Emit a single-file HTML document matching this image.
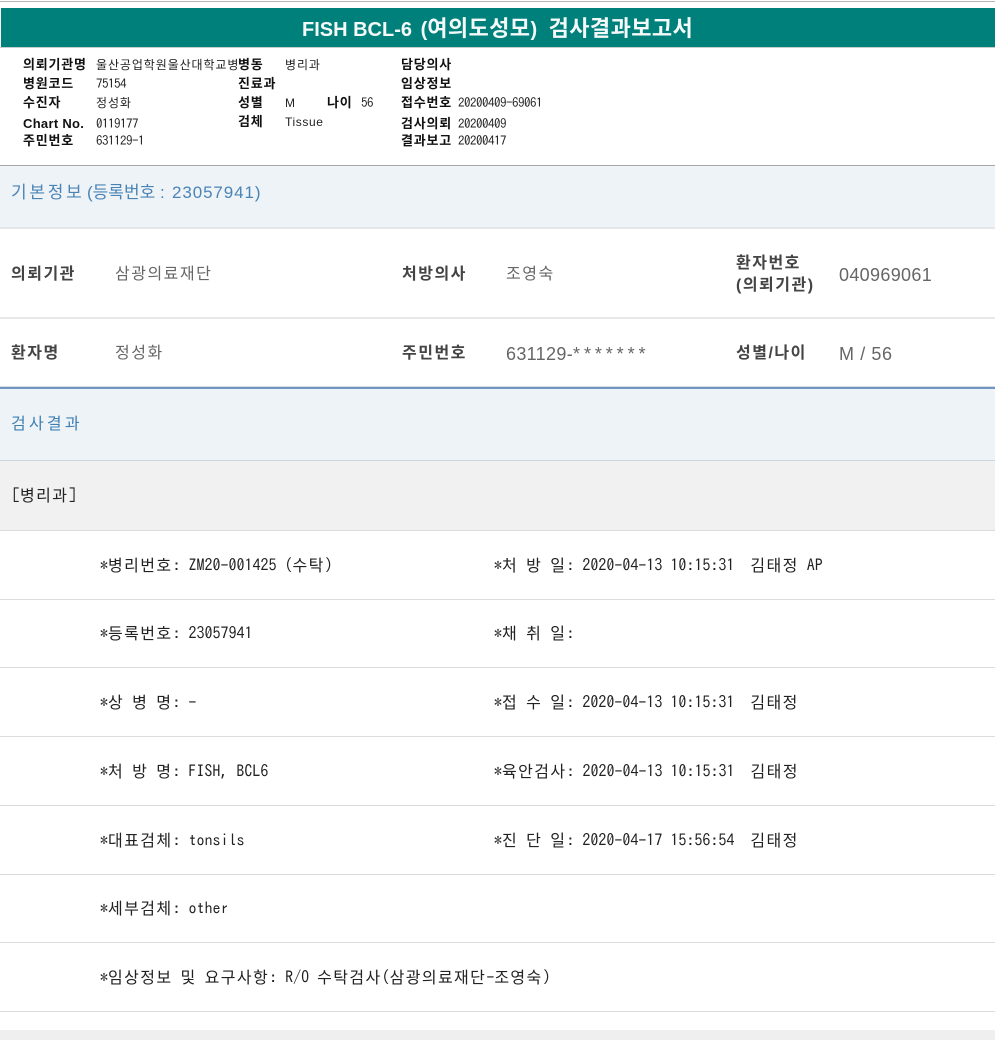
<!DOCTYPE html>
<html lang="ko"><head><meta charset="utf-8"><title>FISH BCL-6</title>
<style>
html,body{margin:0;padding:0;background:#fff}
#p{position:relative;width:995px;height:1040px;overflow:hidden;background:#fff;font-family:"Liberation Sans","Noto Sans CJK KR",sans-serif}
#p div{position:absolute;white-space:pre}
.b{left:0;width:995px}
.h{font:bold 13px/16px "Liberation Sans","WenQuanYi Zen Hei","Noto Sans CJK KR",sans-serif;color:#111;letter-spacing:.8px;margin-top:1px}
.v{font:13px/16px "IPAGothic","WenQuanYi Zen Hei","Noto Sans CJK KR",sans-serif;color:#222;letter-spacing:-.5px;margin-top:1px}
.v i{font-style:normal;font-size:12px;letter-spacing:.9px}
.t{font:bold 16px/22px "Liberation Sans","Noto Sans CJK KR",sans-serif;color:#444;letter-spacing:1.5px;margin-top:2px}
.d{font:16px/22px "Liberation Sans","Noto Sans CJK KR",sans-serif;color:#666;letter-spacing:1.5px;margin-top:2px}
.n{font-size:18px;letter-spacing:.33px}
.s{font:17px/22px "Liberation Sans","Noto Sans CJK KR",sans-serif;color:#4a84b5;margin-top:2px}
.m{font:16px/20px "IPAGothic","WenQuanYi Zen Hei","Noto Sans CJK KR",monospace;color:#222}
.m i{font-style:normal;letter-spacing:1.4px}
</style></head><body><div id="p">
<div class="b" style="top:1px;height:1px;background:#b5b5b5"></div>
<div style="left:1px;top:8px;width:994px;height:39px;background:#00807a"></div>
<div class="b" style="top:47px;height:1px;background:#c4cfcd"></div>
<div style="left:302px;top:15px;font:bold 20px/28px 'Liberation Sans','Noto Sans CJK KR',sans-serif;color:#f4faf9">FISH BCL-6 <span style="margin-left:3px">(</span><span style="font-size:22px;letter-spacing:.4px">여의도성모</span>) <span style="font-size:22px;letter-spacing:.4px;margin-left:6px">검사결과보고서</span></div>

<div class="h" style="left:23px;top:56px">의뢰기관명</div><div class="v" style="left:96px;top:56px"><i>울산공업학원울산대학교병</i></div>
<div class="h" style="left:238px;top:56px">병동</div><div class="v" style="left:285px;top:56px"><i>병리과</i></div>
<div class="h" style="left:401px;top:56px">담당의사</div>
<div class="h" style="left:23px;top:75px">병원코드</div><div class="v" style="left:96px;top:75px">75154</div>
<div class="h" style="left:238px;top:75px">진료과</div>
<div class="h" style="left:401px;top:75px">임상정보</div>
<div class="h" style="left:23px;top:94px">수진자</div><div class="v" style="left:96px;top:94px"><i>정성화</i></div>
<div class="h" style="left:238px;top:94px">성별</div><div class="v" style="left:285px;top:94px;font:12px/16px 'Liberation Sans',sans-serif">M</div>
<div class="h" style="left:327px;top:94px">나이</div><div class="v" style="left:361px;top:94px">56</div>
<div class="h" style="left:401px;top:94px">접수번호</div><div class="v" style="left:458px;top:94px">20200409-69061</div>
<div class="h" style="left:23px;top:115px;letter-spacing:.3px">Chart No.</div><div class="v" style="left:96px;top:115px">0119177</div>
<div class="h" style="left:238px;top:113px">검체</div><div class="v" style="left:285px;top:113px;font:12px/16px 'Liberation Sans',sans-serif;letter-spacing:.6px">Tissue</div>
<div class="h" style="left:401px;top:115px">검사의뢰</div><div class="v" style="left:458px;top:115px">20200409</div>
<div class="h" style="left:23px;top:132px">주민번호</div><div class="v" style="left:96px;top:132px">631129-1</div>
<div class="h" style="left:401px;top:132px">결과보고</div><div class="v" style="left:458px;top:132px">20200417</div>

<div class="b" style="top:165px;height:1px;background:#a8a8a8"></div>
<div class="b" style="top:166px;height:61px;background:#eef3f8"></div>
<div class="b" style="top:227px;height:2px;background:#e4e6e8"></div>
<div class="s" style="left:11px;top:180px;letter-spacing:-1px">기 본 정 보</div>
<div class="s" style="left:87px;top:180px">(등록번호 :</div>
<div class="s" style="left:172px;top:180px;letter-spacing:.9px">23057941)</div>

<div class="t" style="left:11px;top:262px">의뢰기관</div><div class="d" style="left:115px;top:262px">삼광의료재단</div>
<div class="t" style="left:402px;top:262px">처방의사</div><div class="d" style="left:506px;top:262px">조영숙</div>
<div class="t" style="left:736px;top:251px">환자번호</div><div class="t" style="left:736px;top:273px">(의뢰기관)</div>
<div class="d n" style="left:839px;top:262px">040969061</div>
<div class="b" style="top:317px;height:2px;background:#e8e8e8"></div>

<div class="t" style="left:11px;top:341px">환자명</div><div class="d" style="left:115px;top:341px">정성화</div>
<div class="t" style="left:402px;top:341px">주민번호</div><div class="d n" style="left:506px;top:341px">631129-<span style="letter-spacing:3.9px">*******</span></div>
<div class="t" style="left:736px;top:341px">성별/나이</div><div class="d n" style="left:839px;top:341px;letter-spacing:.6px">M / 56</div>

<div class="b" style="top:386px;height:1px;background:#d2dbe6"></div>
<div class="b" style="top:387px;height:2px;background:#7296c4"></div>
<div class="b" style="top:389px;height:71px;background:#eef3f8"></div>
<div class="b" style="top:460px;height:1px;background:#ccd6e0"></div>
<div class="s" style="left:11px;top:412px;color:#3f7fb2;font-size:16px;letter-spacing:-.6px">검 사 결 과</div>
<div class="b" style="top:461px;height:69px;background:#f1f1f1"></div>
<div class="b" style="top:530px;height:1px;background:#dcdcdc"></div>
<div class="m" style="left:12px;top:485px">[<i>병리과</i>]</div>

<div class="b" style="top:599px;height:1px;background:#dcdcdc"></div>
<div class="b" style="top:667px;height:1px;background:#dcdcdc"></div>
<div class="b" style="top:736px;height:1px;background:#dcdcdc"></div>
<div class="b" style="top:805px;height:1px;background:#dcdcdc"></div>
<div class="b" style="top:874px;height:1px;background:#dcdcdc"></div>
<div class="b" style="top:942px;height:1px;background:#dcdcdc"></div>
<div class="b" style="top:1011px;height:1px;background:#dcdcdc"></div>
<div class="b" style="top:1030px;height:10px;background:#efefef"></div>

<div class="m" style="left:100px;top:555px">*<i>병리번호</i>: ZM20-001425 (<i>수탁</i>)</div>
<div class="m" style="left:494px;top:555px">*<i>처</i> <i>방</i> <i>일</i>: 2020-04-13 10:15:31  <i>김태정</i> AP</div>
<div class="m" style="left:100px;top:623px">*<i>등록번호</i>: 23057941</div>
<div class="m" style="left:494px;top:623px">*<i>채</i> <i>취</i> <i>일</i>:</div>
<div class="m" style="left:100px;top:692px">*<i>상</i> <i>병</i> <i>명</i>: -</div>
<div class="m" style="left:494px;top:692px">*<i>접</i> <i>수</i> <i>일</i>: 2020-04-13 10:15:31  <i>김태정</i></div>
<div class="m" style="left:100px;top:761px">*<i>처</i> <i>방</i> <i>명</i>: FISH, BCL6</div>
<div class="m" style="left:494px;top:761px">*<i>육안검사</i>: 2020-04-13 10:15:31  <i>김태정</i></div>
<div class="m" style="left:100px;top:830px">*<i>대표검체</i>: tonsils</div>
<div class="m" style="left:494px;top:830px">*<i>진</i> <i>단</i> <i>일</i>: 2020-04-17 15:56:54  <i>김태정</i></div>
<div class="m" style="left:100px;top:898px">*<i>세부검체</i>: other</div>
<div class="m" style="left:100px;top:967px">*<i>임상정보</i> <i>및</i> <i>요구사항</i>: R/O <i>수탁검사</i>(<i>삼광의료재단</i>-<i>조영숙</i>)</div>
</div></body></html>
